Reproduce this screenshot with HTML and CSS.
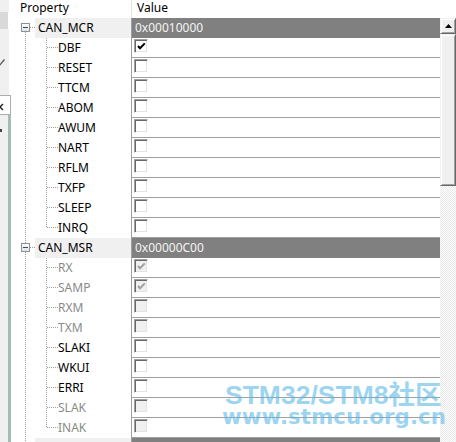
FILE: index.html
```html
<!DOCTYPE html>
<html lang="en">
<head>
<meta charset="utf-8">
<title>Property grid</title>
<link rel="stylesheet" href="styles.css">
</head>
<body>
<div class="app">
  <aside class="side">
    <div class="s-top"></div>
    <div class="s-sel"></div>
    <div class="s-mid"><svg class="s-chev" width="6" height="10" viewBox="0 0 6 10"><path d="M-1 8 L4.5 1.5" stroke="#555" stroke-width="1.3" fill="none"/></svg></div>
    <div class="s-box"><svg class="s-x" width="6" height="10" viewBox="0 0 6 10"><path d="M-3 2 L3 8 M-3 8 L3 2" stroke="#222" stroke-width="1.4" fill="none"/></svg></div>
    <div class="s-low"><span class="s-mark"></span></div>
  </aside>

  <div class="grid">
    <div class="head">
      <div class="h-name">Property</div>
      <div class="h-val">Value</div>
    </div>
    <div class="main">
      <div class="rows">
        <div class="row cat">
          <div class="gut first"><span class="exp"></span></div>
          <div class="name">CAN_MCR</div><div class="sep"></div>
          <div class="val">0x00010000</div>
        </div>
        <div class="row"><div class="gut"></div><div class="name child">DBF</div><div class="sep"></div><div class="val"><span class="cb"><svg width="12" height="12" viewBox="0 0 12 12"><path d="M3 6 L5 8.2 L9.8 3.4" stroke="#000" stroke-width="2" fill="none"/></svg></span></div></div>
        <div class="row"><div class="gut"></div><div class="name child">RESET</div><div class="sep"></div><div class="val"><span class="cb"></span></div></div>
        <div class="row"><div class="gut"></div><div class="name child">TTCM</div><div class="sep"></div><div class="val"><span class="cb"></span></div></div>
        <div class="row"><div class="gut"></div><div class="name child">ABOM</div><div class="sep"></div><div class="val"><span class="cb"></span></div></div>
        <div class="row"><div class="gut"></div><div class="name child">AWUM</div><div class="sep"></div><div class="val"><span class="cb"></span></div></div>
        <div class="row"><div class="gut"></div><div class="name child">NART</div><div class="sep"></div><div class="val"><span class="cb"></span></div></div>
        <div class="row"><div class="gut"></div><div class="name child">RFLM</div><div class="sep"></div><div class="val"><span class="cb"></span></div></div>
        <div class="row"><div class="gut"></div><div class="name child">TXFP</div><div class="sep"></div><div class="val"><span class="cb"></span></div></div>
        <div class="row"><div class="gut"></div><div class="name child">SLEEP</div><div class="sep"></div><div class="val"><span class="cb"></span></div></div>
        <div class="row"><div class="gut"></div><div class="name child last">INRQ</div><div class="sep"></div><div class="val"><span class="cb"></span></div></div>

        <div class="row cat">
          <div class="gut"><span class="exp"></span></div>
          <div class="name">CAN_MSR</div><div class="sep"></div>
          <div class="val">0x00000C00</div>
        </div>
        <div class="row"><div class="gut"></div><div class="name child ro">RX</div><div class="sep"></div><div class="val"><span class="cb dis"><svg width="12" height="12" viewBox="0 0 12 12"><path d="M3 6 L5 8.2 L9.8 3.4" stroke="#a0a0a0" stroke-width="2" fill="none"/></svg></span></div></div>
        <div class="row"><div class="gut"></div><div class="name child ro">SAMP</div><div class="sep"></div><div class="val"><span class="cb dis"><svg width="12" height="12" viewBox="0 0 12 12"><path d="M3 6 L5 8.2 L9.8 3.4" stroke="#a0a0a0" stroke-width="2" fill="none"/></svg></span></div></div>
        <div class="row"><div class="gut"></div><div class="name child ro">RXM</div><div class="sep"></div><div class="val"><span class="cb dis"></span></div></div>
        <div class="row"><div class="gut"></div><div class="name child ro">TXM</div><div class="sep"></div><div class="val"><span class="cb dis"></span></div></div>
        <div class="row"><div class="gut"></div><div class="name child">SLAKI</div><div class="sep"></div><div class="val"><span class="cb"></span></div></div>
        <div class="row"><div class="gut"></div><div class="name child">WKUI</div><div class="sep"></div><div class="val"><span class="cb"></span></div></div>
        <div class="row"><div class="gut"></div><div class="name child">ERRI</div><div class="sep"></div><div class="val"><span class="cb"></span></div></div>
        <div class="row"><div class="gut"></div><div class="name child ro">SLAK</div><div class="sep"></div><div class="val"><span class="cb dis"></span></div></div>
        <div class="row"><div class="gut"></div><div class="name child ro last">INAK</div><div class="sep"></div><div class="val"><span class="cb dis"></span></div></div>

        <div class="row cat">
          <div class="gut"><span class="exp"></span></div>
          <div class="name"></div><div class="sep"></div>
          <div class="val"></div>
        </div>
      </div>
      <div class="sb">
        <div class="sb-btn"><svg width="7" height="4" viewBox="0 0 7 4"><path d="M3.5 0 L7 4 L0 4 Z" fill="#000"/></svg></div>
        <div class="sb-thumb"></div>
        <div class="sb-track"></div>
      </div>
    </div>
  </div>

  <div class="wm">
    <div class="wm1">STM32/STM8社区</div>
    <div class="wm2">www.stmcu.org.cn</div>
  </div>
</div>
</body>
</html>
```

FILE: styles.css
```css
* { box-sizing: border-box; margin: 0; padding: 0; }
html, body { width: 456px; height: 442px; overflow: hidden; background: #fff; }
body { font-family: "Noto Sans", "Open Sans", sans-serif; font-size: 12px; color: #000; }

.app { position: relative; display: flex; height: 442px; }

/* left partial pane */
.side { width: 11px; flex: none; display: flex; flex-direction: column; overflow: hidden; }
.s-top { height: 12px; background: #f0f0f0; border-right: 2px solid #fff; }
.s-sel { height: 17px; background: #d9d9d9; border-right: 3px solid #fff; }
.s-mid { height: 66px; background: #f0f0f0; border-right: 2px solid #fff; padding-top: 29px; }
.s-chev { display: block; }
.s-box { height: 20px; background: #fff; border-top: 1px solid #adadad; border-right: 1px solid #adadad; border-bottom: 1px solid #adadad; padding-top: 6px; }
.s-x { display: block; }
.s-low { flex: 1; background: #f0f0f0; border-right: 3px solid #a5bdb4; }
.s-mark { display: block; margin-top: 14px; width: 2px; height: 3px; background: #444; }

/* grid */
.grid { flex: 1; min-width: 0; display: flex; flex-direction: column; }
.head { height: 18px; flex: none; display: flex; }
.h-name { width: 121px; padding-left: 9px; line-height: 16.4px; border-right: 1px solid #e3e3e3; }
.h-val { flex: 1; padding-left: 5px; line-height: 16.4px; }

.main { flex: 1; min-height: 0; display: flex; }
.rows { flex: 1; min-width: 0; overflow: hidden; }

.row { display: grid; grid-template-columns: 24px 96px 1px 1fr; height: 20px; }
.sep { background: #a0a0a0; }

.gut {
  background-image: repeating-linear-gradient(to bottom, #a0a0a0 0 1px, transparent 1px 2px);
  background-size: 1px 20px;
  background-position: 14px 0;
  background-repeat: no-repeat;
}
.name { line-height: 19px; white-space: nowrap; overflow: hidden; }
.val { border-bottom: 1px solid #a0a0a0; line-height: 19px; }

.child {
  padding-left: 23px;
  background-image:
    repeating-linear-gradient(to bottom, #a0a0a0 0 1px, transparent 1px 2px),
    repeating-linear-gradient(to right, #a0a0a0 0 1px, transparent 1px 2px);
  background-size: 1px 20px, 11px 1px;
  background-position: 11px 0, 12px 9px;
  background-repeat: no-repeat;
}
.child.last { background-size: 1px 10px, 11px 1px; }
.ro { color: #8a8a8a; }

/* category rows */
.cat .gut {
  background-image:
    repeating-linear-gradient(to bottom, #a0a0a0 0 1px, transparent 1px 2px),
    repeating-linear-gradient(to right, #a0a0a0 0 1px, transparent 1px 2px);
  background-size: 1px 20px, 5px 1px;
  background-position: 14px 0, 19px 9px;
  background-repeat: no-repeat;
}
.cat .gut.first { background-size: 1px 6px, 5px 1px; background-position: 14px 14px, 19px 9px; }
.cat .name { background: #f0f0f0; padding-left: 3px; }
.cat .val { background: #808080; color: #f4f4f4; padding-left: 3px; border-bottom: 0; }

.exp {
  display: block;
  width: 9px; height: 9px;
  margin: 5px 0 0 10px;
  border: 1px solid #919191;
  background:
    linear-gradient(#2b4c7e, #2b4c7e) 1px 3px / 5px 1px no-repeat,
    linear-gradient(#fff, #e4e4e4);
}

/* checkboxes */
.cb {
  display: block;
  width: 14px; height: 14px;
  margin: 1px 0 0 2px;
  border: 1px solid;
  border-color: #a0a0a0 #fff #fff #a0a0a0;
  box-shadow: inset 1px 1px 0 #696969, inset -1px -1px 0 #e3e3e3;
  background: #fff;
}
.cb svg { display: block; }
.cb.dis { background: #f0f0f0; }

/* scrollbar */
.sb { width: 16px; flex: none; display: flex; flex-direction: column; }
.sb-btn, .sb-thumb {
  background: #f0f0f0;
  border: 1px solid;
  border-color: #f0f0f0 #696969 #696969 #f0f0f0;
  box-shadow: inset 1px 1px 0 #fff, inset -1px -1px 0 #a0a0a0;
}
.sb-btn { height: 16px; display: flex; align-items: center; justify-content: center; padding-bottom: 1px; }
.sb-btn svg { display: block; }
.sb-thumb { height: 152px; }
.sb-track { flex: 1; background: repeating-conic-gradient(#fff 0 25%, #e8e8e8 0 50%) 0 0 / 2px 2px; }

/* watermark */
.wm { position: absolute; left: 222px; top: 382px; color: rgba(91, 185, 232, 0.6); font-weight: bold; pointer-events: none; white-space: nowrap; }
.wm1 { font-family: "Liberation Sans", "Noto Sans CJK SC", sans-serif; font-size: 26.5px; line-height: 27px; padding-left: 3px; }
.wm2 { font-family: "DejaVu Sans", sans-serif; font-size: 21.4px; line-height: 16px; }
```
